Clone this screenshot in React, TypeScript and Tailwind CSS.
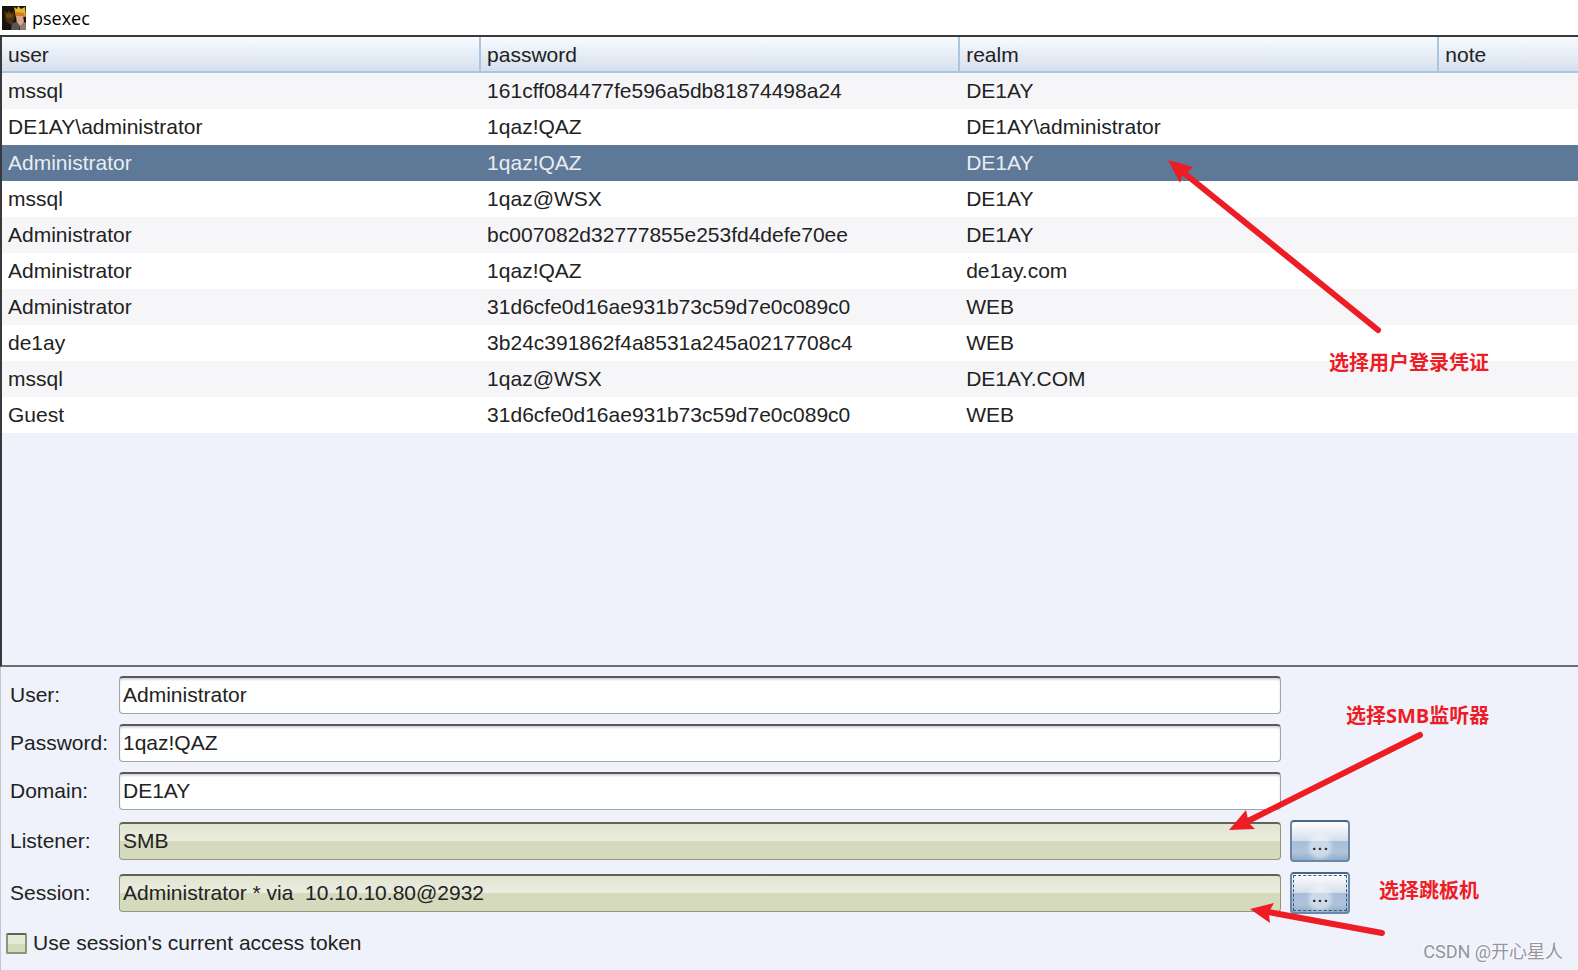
import React, { useState } from 'react';

const columns = ['user', 'password', 'realm', 'note'];

const credentials = [
  { user: 'mssql', password: '161cff084477fe596a5db81874498a24', realm: 'DE1AY' },
  { user: 'DE1AY\\administrator', password: '1qaz!QAZ', realm: 'DE1AY\\administrator' },
  { user: 'Administrator', password: '1qaz!QAZ', realm: 'DE1AY' },
  { user: 'mssql', password: '1qaz@WSX', realm: 'DE1AY' },
  { user: 'Administrator', password: 'bc007082d32777855e253fd4defe70ee', realm: 'DE1AY' },
  { user: 'Administrator', password: '1qaz!QAZ', realm: 'de1ay.com' },
  { user: 'Administrator', password: '31d6cfe0d16ae931b73c59d7e0c089c0', realm: 'WEB' },
  { user: 'de1ay', password: '3b24c391862f4a8531a245a0217708c4', realm: 'WEB' },
  { user: 'mssql', password: '1qaz@WSX', realm: 'DE1AY.COM' },
  { user: 'Guest', password: '31d6cfe0d16ae931b73c59d7e0c089c0', realm: 'WEB' },
];

const AppIcon = () => (
  <svg width="24" height="24" viewBox="0 0 24 24" aria-hidden="true">
    <rect width="24" height="24" fill="#17140f" />
    <path d="M2 5l3 2 2-3 2 3 3-2 1 7-4 7-5-4z" fill="#4a330c" />
    <path d="M4 8l4-1 3 2-2 3-4 0z" fill="#6b4a10" />
    <path d="M12 1l3 2 1-3 3 3 4-2 1 10-4-2-6 2z" fill="#e8b62c" />
    <path d="M13 6l9 1 1 4-9 0z" fill="#cf7a24" />
    <path d="M14 10l7 0 1 6-3 5-4-3z" fill="#dba68c" />
    <path d="M10 17l5-1 3 4-1 4-8 0z" fill="#5a5552" />
    <path d="M18 20l4-4 2 1v7h-6z" fill="#8b7d70" />
  </svg>
);

type FieldProps = {
  id: string;
  label: string;
  value: string;
  onChange?: (value: string) => void;
  browse?: boolean;
  focused?: boolean;
};

const Field = ({ id, label, value, onChange, browse, focused }: FieldProps) => (
  <div className="flex items-center">
    <label htmlFor={id} className="w-[109px] shrink-0">{label}</label>
    <input
      id={id}
      type="text"
      value={value}
      readOnly={!onChange}
      onChange={(e) => onChange && onChange(e.target.value)}
      className={
        browse
          ? 'h-[38px] min-w-0 flex-1 rounded-[4px] border border-t-2 border-[#92967f] border-t-[#62644f] bg-linear-to-b from-[#e2e5d2] from-0% via-[#ebeddf] via-50% to-[#d6dabd] to-50% px-[3px] pb-[2px] outline-none'
          : 'h-[38px] min-w-0 flex-1 rounded-[4px] border border-t-2 border-[#a0a3aa] border-t-[#55585c] bg-white px-[3px] pb-[2px] shadow-[inset_0_2px_2px_#dcdcde] outline-none'
      }
    />
    <div className="ml-[9px] w-[60px] shrink-0">
      {browse && (
        <button
          type="button"
          aria-label={`Choose ${id}`}
          className="flex h-[42px] w-full rounded-[4px] border-2 border-[#6988a9] border-t-[#46678a] bg-[radial-gradient(ellipse_14px_16px_at_50%_65%,#ffffff66_60%,transparent),linear-gradient(#ffffff,#d3deec_50%,#a6bedb_50%,#b0c3da_80%,#93adc9)] p-px text-[21px] leading-[24px]"
        >
          <span
            className={
              focused
                ? 'flex h-full w-full items-end justify-center border border-dashed border-[#38597c] pb-[3px]'
                : 'flex h-full w-full items-end justify-center border border-transparent pb-[3px]'
            }
          >
            ...
          </span>
        </button>
      )}
    </div>
  </div>
);

const App = () => {
  const [selected, setSelected] = useState(2);
  const [user, setUser] = useState('Administrator');
  const [password, setPassword] = useState('1qaz!QAZ');
  const [domain, setDomain] = useState('DE1AY');
  const [useToken, setUseToken] = useState(false);

  const selectRow = (index: number) => {
    setSelected(index);
    setUser(credentials[index].user);
    setPassword(credentials[index].password);
    setDomain(credentials[index].realm);
  };

  return (
    <div className="relative flex min-h-screen flex-col overflow-hidden bg-[#eff2fa] font-['Liberation_Sans',Arial,sans-serif] text-[21px] leading-[24px] text-[#222222]">
      <header className="flex h-[35px] items-center gap-[6px] bg-white pl-[2px] font-['Open_Sans',sans-serif] text-[18px] text-black">
        <AppIcon />
        <h1>psexec</h1>
      </header>

      <div className="min-h-[632px] border-y-2 border-l-2 border-[#38393b] border-b-[#6c6f72]">
        <table className="w-full table-fixed border-separate border-spacing-0 text-left">
          <colgroup>
            <col className="w-[30.4%]" />
            <col className="w-[30.4%]" />
            <col className="w-[30.4%]" />
            <col />
          </colgroup>
          <thead>
            <tr className="h-[36px] bg-linear-to-b from-[#f8fbff] to-[#d3deec]">
              {columns.map((name) => (
                <th key={name} className="border-r-2 border-b-2 border-[#a9c5e0] p-0 pt-[2px] pl-[6px] font-normal last:border-r-0">{name}</th>
              ))}
            </tr>
          </thead>
          <tbody>
            {credentials.map((row, index) => (
              <tr
                key={index}
                onClick={() => selectRow(index)}
                className={
                  index === selected
                    ? 'h-[36px] bg-[#5d7997] text-[#e9edf2]'
                    : 'h-[36px] odd:bg-[#f6f6f9] even:bg-white'
                }
              >
                <td className="p-0 pl-[6px]">{row.user}</td>
                <td className="p-0 pl-[6px]">{row.password}</td>
                <td className="p-0 pl-[6px]">{row.realm}</td>
                <td className="p-0 pl-[6px]"></td>
              </tr>
            ))}
          </tbody>
        </table>
      </div>

      <form className="flex flex-1 flex-col gap-[10px] border-l border-[#c3c7ce] pt-[9px] pr-[228px] pl-[9px]" onSubmit={(e) => e.preventDefault()}>
        <Field id="user" label="User:" value={user} onChange={setUser} />
        <Field id="password" label="Password:" value={password} onChange={setPassword} />
        <Field id="domain" label="Domain:" value={domain} onChange={setDomain} />
        <Field id="listener" label="Listener:" value="SMB" browse />
        <Field id="session" label="Session:" value="Administrator * via  10.10.10.80@2932" browse focused />
        <label className="-ml-[4px] flex items-center gap-[6px] pt-[7px]">
          <input
            type="checkbox"
            checked={useToken}
            onChange={(e) => setUseToken(e.target.checked)}
            className="h-[21px] w-[21px] appearance-none rounded-[2px] border-2 border-[#8f937c] border-t-[#62644f] bg-linear-to-b from-[#e6e9d9] from-50% to-[#d6dabd] to-50% checked:bg-[#62644f]"
          />
          Use session's current access token
        </label>
      </form>

      {/* arrows and notes over the dialog */}
      <svg className="pointer-events-none absolute top-0 left-0" width="1578" height="970" viewBox="0 0 1578 970" fill="#ee1c25" stroke="#ee1c25" aria-hidden="true">
        <path d="M1184 173L1378 330M1246 822L1420 735M1268 912L1382 933" strokeWidth="6" strokeLinecap="round" />
        <path d="M1168 160L1193 167L1186 173L1182 176L1180 183Z" stroke="none" />
        <path d="M1229 830L1246 810L1248 819L1250 824L1255 829Z" stroke="none" />
        <path d="M1250 909L1274 903L1270 910L1269 915L1270 923Z" stroke="none" />
      </svg>
      <div className="pointer-events-none font-['Open_Sans','Noto_Sans_CJK_SC',sans-serif] text-[20px] font-bold whitespace-nowrap text-[#ee1c25]">
        <p className="absolute top-[351px] left-[1329px]">选择用户登录凭证</p>
        <p className="absolute top-[704px] left-[1346px]">选择SMB监听器</p>
        <p className="absolute top-[879px] left-[1379px]">选择跳板机</p>
      </div>
      <p className="pointer-events-none absolute right-[15px] bottom-[6px] font-['Roboto','Noto_Sans_CJK_SC',sans-serif] text-[18px] text-[#93959a] [text-shadow:-1px_-1px_0_#ffffff]">
        CSDN @开心星人
      </p>
    </div>
  );
};

export default App;
